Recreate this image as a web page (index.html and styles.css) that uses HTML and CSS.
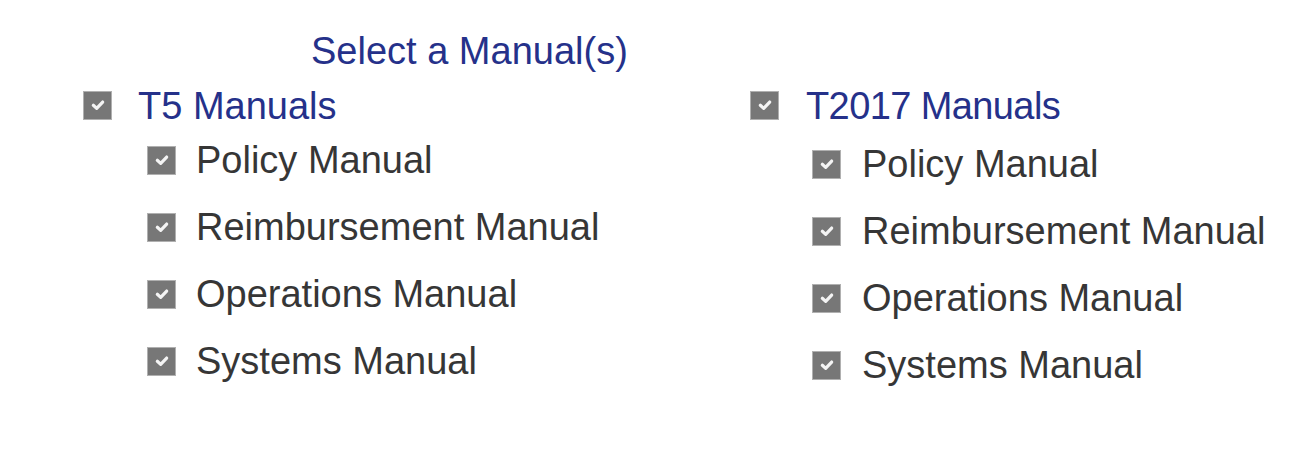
FILE: index.html
```html
<!DOCTYPE html>
<html>
<head>
<meta charset="utf-8">
<link rel="stylesheet" href="styles.css">
</head>
<body>
<div class="page">
  <h1 class="title">Select a Manual(s)</h1>
  <div class="columns">
    <div class="group">
      <label class="row head">
        <span class="box head-box"><svg viewBox="0 0 12 12" class="tick"><polyline points="2.5,6.2 5,8.5 9.5,3.8"/></svg></span>
        <span class="head-text">T5 Manuals</span>
      </label>
      <ul class="items">
        <li class="row item"><span class="box"><svg viewBox="0 0 12 12" class="tick"><polyline points="2.5,6.2 5,8.5 9.5,3.8"/></svg></span><span>Policy Manual</span></li>
        <li class="row item"><span class="box"><svg viewBox="0 0 12 12" class="tick"><polyline points="2.5,6.2 5,8.5 9.5,3.8"/></svg></span><span>Reimbursement Manual</span></li>
        <li class="row item"><span class="box"><svg viewBox="0 0 12 12" class="tick"><polyline points="2.5,6.2 5,8.5 9.5,3.8"/></svg></span><span>Operations Manual</span></li>
        <li class="row item"><span class="box"><svg viewBox="0 0 12 12" class="tick"><polyline points="2.5,6.2 5,8.5 9.5,3.8"/></svg></span><span>Systems Manual</span></li>
      </ul>
    </div>
    <div class="group group-right">
      <label class="row head">
        <span class="box head-box"><svg viewBox="0 0 12 12" class="tick"><polyline points="2.5,6.2 5,8.5 9.5,3.8"/></svg></span>
        <span class="head-text">T2017 Manuals</span>
      </label>
      <ul class="items">
        <li class="row item"><span class="box"><svg viewBox="0 0 12 12" class="tick"><polyline points="2.5,6.2 5,8.5 9.5,3.8"/></svg></span><span>Policy Manual</span></li>
        <li class="row item"><span class="box"><svg viewBox="0 0 12 12" class="tick"><polyline points="2.5,6.2 5,8.5 9.5,3.8"/></svg></span><span>Reimbursement Manual</span></li>
        <li class="row item"><span class="box"><svg viewBox="0 0 12 12" class="tick"><polyline points="2.5,6.2 5,8.5 9.5,3.8"/></svg></span><span>Operations Manual</span></li>
        <li class="row item"><span class="box"><svg viewBox="0 0 12 12" class="tick"><polyline points="2.5,6.2 5,8.5 9.5,3.8"/></svg></span><span>Systems Manual</span></li>
      </ul>
    </div>
  </div>
</div>
</body>
</html>
```

FILE: styles.css
```css
html, body {
  margin: 0;
  padding: 0;
  background: #ffffff;
}

body {
  font-family: "Liberation Sans", Arial, sans-serif;
  font-size: 38px;
  line-height: 44px;
  color: #363636;
}

.page {
  padding: 29px 0 0 83px;
}

.title {
  margin: 0 0 11px 228px;
  font-size: 38px;
  font-weight: normal;
  line-height: 44px;
  color: #25318a;
}

.columns {
  display: grid;
  grid-template-columns: 667px auto;
}

.row {
  display: flex;
  align-items: center;
  height: 44px;
}

.head-text {
  color: #25318a;
  margin-left: 26px;
}

.group-right .head-text {
  margin-left: 27px;
  letter-spacing: -0.6px;
}

.head-box {
  margin-top: -2px;
}

.box {
  flex: none;
  box-sizing: border-box;
  width: 29px;
  height: 29px;
  background: #777777;
  border: 1px solid #b0b0b0;
  display: flex;
  align-items: center;
  justify-content: center;
}

.tick {
  width: 16px;
  height: 16px;
  fill: none;
  stroke: #f4f4f4;
  stroke-width: 2.4;
  stroke-linecap: round;
  stroke-linejoin: round;
}

.items {
  list-style: none;
  margin: 10px 0 0 64px;
  padding: 0;
  display: flex;
  flex-direction: column;
  gap: 23px;
}

.group-right .items {
  margin-top: 14px;
  margin-left: 62px;
}

.item .box {
  margin-right: 20px;
}

.group-right .item .box {
  margin-right: 21px;
}
```
